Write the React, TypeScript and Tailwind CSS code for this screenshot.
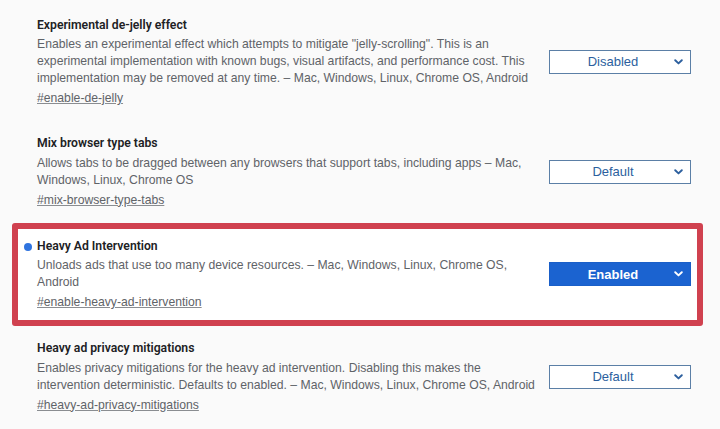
import React from "react";

type Flag = {
  title: string;
  desc: string;
  link: string;
  value: string;
  enabled?: boolean;
  highlight?: boolean;
};

const flags: Flag[] = [
  {
    title: "Experimental de-jelly effect",
    desc:
      'Enables an experimental effect which attempts to mitigate "jelly-scrolling". This is an experimental implementation with known bugs, visual artifacts, and performance cost. This implementation may be removed at any time. – Mac, Windows, Linux, Chrome OS, Android',
    link: "#enable-de-jelly",
    value: "Disabled",
  },
  {
    title: "Mix browser type tabs",
    desc:
      "Allows tabs to be dragged between any browsers that support tabs, including apps – Mac, Windows, Linux, Chrome OS",
    link: "#mix-browser-type-tabs",
    value: "Default",
  },
  {
    title: "Heavy Ad Intervention",
    desc: "Unloads ads that use too many device resources. – Mac, Windows, Linux, Chrome OS, Android",
    link: "#enable-heavy-ad-intervention",
    value: "Enabled",
    enabled: true,
    highlight: true,
  },
  {
    title: "Heavy ad privacy mitigations",
    desc:
      "Enables privacy mitigations for the heavy ad intervention. Disabling this makes the intervention deterministic. Defaults to enabled. – Mac, Windows, Linux, Chrome OS, Android",
    link: "#heavy-ad-privacy-mitigations",
    value: "Default",
  },
];

function Chevron({ color }: { color: string }) {
  return (
    <svg width="9" height="6" viewBox="0 0 9 6" className="shrink-0">
      <path d="M1.2 1.2 L4.5 4.4 L7.8 1.2" fill="none" stroke={color} strokeWidth="1.9" strokeLinecap="round" strokeLinejoin="round" />
    </svg>
  );
}

function Select({ value, enabled }: { value: string; enabled?: boolean }) {
  return (
    <div
      className={
        enabled
          ? "flex h-[24px] w-[142px] shrink-0 items-center border border-[#1a5fc8] bg-[#1b63d0] pl-[8px] pr-[7px]"
          : "flex h-[24px] w-[142px] shrink-0 items-center border border-[#5b7fa6] bg-white pl-[8px] pr-[7px]"
      }
    >
      <span
        className={
          enabled
            ? "flex-1 pr-[6px] text-center text-[13px] font-semibold text-white"
            : "flex-1 pr-[6px] text-center text-[13px] text-[#2c5f9e]"
        }
      >
        {value}
      </span>
      <Chevron color={enabled ? "#ffffff" : "#2c5f9e"} />
    </div>
  );
}

function FlagItem({ f }: { f: Flag }) {
  return (
    <div className={f.highlight ? "flex items-center gap-[14px] py-[9px] pl-[19px] pr-[6px]" : "flex items-center gap-[14px] py-[14px] pl-[25px] pr-[12px]"}>
      <div className="w-[498px] shrink-0">
        <div
          className="relative text-[12.2px] font-semibold leading-[17px] text-[#202124]"
          style={{ fontFamily: 'Roboto, "Liberation Sans", sans-serif' }}
        >
          {f.highlight && (
            <span className="absolute left-[-13px] top-[5px] h-[8px] w-[8px] rounded-full bg-[#2f74df]" />
          )}
          {f.title}
        </div>
        <div className="mt-[2.5px] text-[12.2px] leading-[17px] text-[#5f6368]">{f.desc}</div>
        <div className="mt-[3px] text-[12.2px] leading-[17px] text-[#5f6368] underline decoration-[#8a8d91]">{f.link}</div>
      </div>
      <div className="ml-auto">
        <Select value={f.value} enabled={f.enabled} />
      </div>
    </div>
  );
}

export default function App() {
  return (
    <div
      className="h-[429px] w-[720px] overflow-hidden bg-[#fafafa] pt-[2.5px]"
      style={{ fontFamily: '"Liberation Sans", Arial, sans-serif' }}
    >
      <div className="ml-[12px] w-[691px]">
        {flags.map((f) =>
          f.highlight ? (
            <div key={f.link} className="rounded-[3px] border-[6px] border-[#d0414f] bg-white">
              <FlagItem f={f} />
            </div>
          ) : (
            <FlagItem key={f.link} f={f} />
          )
        )}
      </div>
    </div>
  );
}
